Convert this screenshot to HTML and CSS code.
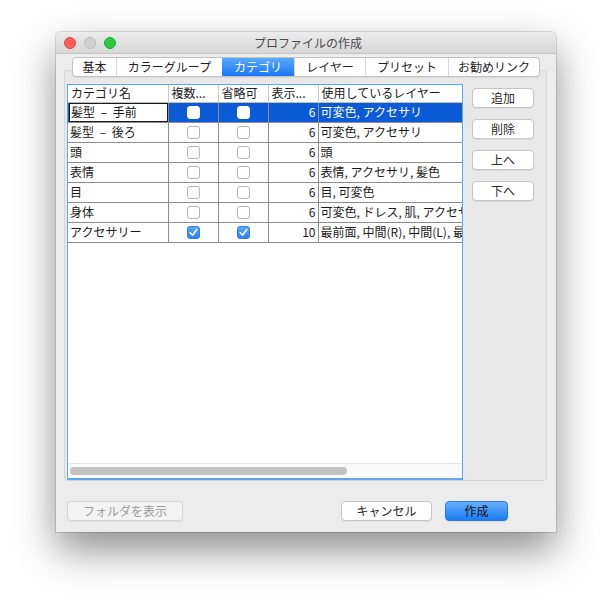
FILE: index.html
```html
<!DOCTYPE html>
<html lang="ja">
<head>
<meta charset="utf-8">
<title>プロファイルの作成</title>
<link rel="stylesheet" href="styles.css">
</head>
<body>
<div class="window">
  <div class="titlebar">
    <div class="lights">
      <span class="light red"></span>
      <span class="light gray"></span>
      <span class="light green"></span>
    </div>
    <div class="title">プロファイルの作成</div>
  </div>
  <div class="content">
    <div class="tabs">
      <div class="tab t1">基本</div>
      <div class="tab t2">カラーグループ</div>
      <div class="tab t3 active">カテゴリ</div>
      <div class="tab t4">レイヤー</div>
      <div class="tab t5">プリセット</div>
      <div class="tab t6">お勧めリンク</div>
    </div>
    <div class="panel">
      <div class="table-wrap">
        <div class="table-clip">
          <table class="grid">
            <colgroup>
              <col class="c1"><col class="c2"><col class="c3"><col class="c4"><col class="c5">
            </colgroup>
            <thead>
              <tr><th>カテゴリ名</th><th>複数...</th><th>省略可</th><th>表示...</th><th>使用しているレイヤー</th></tr>
            </thead>
            <tbody>
              <tr class="sel"><td class="edit"><span class="dash">髪型 – 手前</span></td><td class="cb"><span class="box"></span></td><td class="cb"><span class="box"></span></td><td class="num">6</td><td>可変色, アクセサリ</td></tr>
              <tr><td class="dash">髪型 – 後ろ</td><td class="cb"><span class="box"></span></td><td class="cb"><span class="box"></span></td><td class="num">6</td><td>可変色, アクセサリ</td></tr>
              <tr><td>頭</td><td class="cb"><span class="box"></span></td><td class="cb"><span class="box"></span></td><td class="num">6</td><td>頭</td></tr>
              <tr><td>表情</td><td class="cb"><span class="box"></span></td><td class="cb"><span class="box"></span></td><td class="num">6</td><td>表情, アクセサリ, 髪色</td></tr>
              <tr><td>目</td><td class="cb"><span class="box"></span></td><td class="cb"><span class="box"></span></td><td class="num">6</td><td>目, 可変色</td></tr>
              <tr><td>身体</td><td class="cb"><span class="box"></span></td><td class="cb"><span class="box"></span></td><td class="num">6</td><td>可変色, ドレス, 肌, アクセサリ</td></tr>
              <tr><td>アクセサリー</td><td class="cb"><span class="box checked"><svg viewBox="0 0 13 13" width="13" height="13"><path d="M3.3 6.8 L5.6 9.2 L9.8 3.6" fill="none" stroke="#fff" stroke-width="1.6" stroke-linecap="round" stroke-linejoin="round"/></svg></span></td><td class="cb"><span class="box checked"><svg viewBox="0 0 13 13" width="13" height="13"><path d="M3.3 6.8 L5.6 9.2 L9.8 3.6" fill="none" stroke="#fff" stroke-width="1.6" stroke-linecap="round" stroke-linejoin="round"/></svg></span></td><td class="num">10</td><td>最前面, 中間(R), 中間(L), 最背面</td></tr>
            </tbody>
          </table>
        </div>
        <div class="hscroll"><div class="thumb"></div></div>
      </div>
      <div class="side">
        <button class="btn side-btn">追加</button>
        <button class="btn side-btn">削除</button>
        <button class="btn side-btn">上へ</button>
        <button class="btn side-btn">下へ</button>
      </div>
    </div>
    <div class="footer">
      <button class="btn disabled">フォルダを表示</button>
      <button class="btn cancel">キャンセル</button>
      <button class="btn primary">作成</button>
    </div>
  </div>
</div>
</body>
</html>
```

FILE: styles.css
```css
* { box-sizing: border-box; }
html, body { margin: 0; padding: 0; background: #ffffff; }
body {
  width: 612px;
  height: 612px;
  padding: 32px 0 0 56px;
  font-family: "Noto Sans CJK JP", "Noto Sans", sans-serif;
  font-size: 12px;
  color: #1a1a1a;
}

.window {
  width: 500px;
  height: 500px;
  background: #ececec;
  border-radius: 5px 5px 0 0;
  box-shadow: 0 18px 40px rgba(0,0,0,0.45), 0 0 0 1px rgba(0,0,0,0.12);
  display: flex;
  flex-direction: column;
}

.titlebar {
  height: 22px;
  flex: 0 0 22px;
  background: linear-gradient(#ececec, #d6d6d6);
  border-bottom: 1px solid #c4c4c4;
  border-radius: 5px 5px 0 0;
  display: flex;
  align-items: center;
  position: relative;
}
.lights { display: flex; gap: 8px; padding-left: 8px; }
.light {
  width: 12px; height: 12px; border-radius: 50%;
  display: block;
}
.light.red { background: #fc5f57; border: 1px solid #e1443d; }
.light.gray { background: #d0d0d0; border: 1px solid #bcbcbc; }
.light.green { background: #2ac93f; border: 1px solid #1daa2d; }
.title {
  flex: 1;
  text-align: center;
  color: #4a4a4a;
  font-size: 12px;
  margin-right: 56px;
  line-height: 22px;
}

.content {
  flex: 1;
  display: flex;
  flex-direction: column;
  padding: 3px 9px 0 8px;
}

.tabs {
  display: flex;
  margin-left: 8px;
  height: 20px;
  position: relative;
  z-index: 1;
  align-self: flex-start;
  background: #fff;
  border: 1px solid #c3c3c3;
  border-radius: 4px;
  box-shadow: 0 1px 0 rgba(0,0,0,0.06);
}
.tab {
  height: 18px;
  line-height: 18px;
  text-align: center;
  color: #1e1e1e;
  border-left: 1px solid #d8d8d8;
}
.tab.t1 { width: 43px; border-left: none; }
.tab.t2 { width: 106px; }
.tab.t3 { width: 72px; }
.tab.t4 { width: 71px; }
.tab.t5 { width: 83px; }
.tab.t6 { width: 91px; }
.tab.active {
  background: linear-gradient(#5aa9fd, #1877f5);
  color: #fff;
  border-left: none;
}

.panel {
  margin-top: -7px;
  height: 411px;
  background: #e8e8e8;
  border: 1px solid #d6d6d6;
  border-radius: 4px;
  display: flex;
  padding: 13px 0 0 2px;
}

.table-wrap {
  width: 396px;
  height: 396px;
  border: 1px solid #5ea8f2;
  border-bottom-width: 2px;
  background: #fff;
  display: flex;
  flex-direction: column;
}
.table-clip {
  flex: 1;
  overflow: hidden;
}
.grid {
  border-collapse: collapse;
  table-layout: fixed;
  width: 560px;
  font-size: 12px;
}
.grid col.c1 { width: 100px; }
.grid col.c2 { width: 50px; }
.grid col.c3 { width: 50px; }
.grid col.c4 { width: 50px; }
.grid col.c5 { width: 310px; }
.grid th {
  height: 17px;
  font-weight: normal;
  text-align: left;
  padding: 0 3px;
  border-right: 1px solid #c8c8c8;
  border-bottom: 1px solid #bdbdbd;
  white-space: nowrap;
  overflow: hidden;
  line-height: 16px;
  color: #1a1a1a;
}
.grid td {
  height: 20px;
  padding: 0 2px;
  border-right: 1px solid #8d8d8d;
  border-bottom: 1px solid #8d8d8d;
  white-space: nowrap;
  overflow: hidden;
  line-height: 18px;
}
.grid .dash { word-spacing: 3px; }
.grid td.num { text-align: right; padding-right: 2px; }
.grid td.cb { text-align: center; padding: 0; }
.grid tr.sel td { background: #0b5bd6; color: #fff; }
.grid tr.sel td.edit { background: #0b5bd6; padding: 0; }
.grid tr.sel td.edit span {
  display: block;
  height: 19px;
  margin: 0 0 0 1px;
  background: #fff;
  color: #111;
  border: 1.5px solid #1a1a1a;
  padding: 0 1px;
  line-height: 16px;
}
.box {
  display: inline-block;
  width: 13px;
  height: 13px;
  border: 1px solid #b5b5b5;
  border-radius: 3px;
  background: #fff;
  vertical-align: middle;
  position: relative;
  top: -1px;
}
.grid tr.sel .box { border-color: #fff; }
.box.checked {
  background: linear-gradient(#5ea5fb, #2b83f5);
  border-color: #2f7fe6;
}
.box.checked svg { position: absolute; left: -1px; top: -1px; }

.hscroll {
  height: 15px;
  flex: 0 0 15px;
  background: #f9f9f9;
  border-top: 1px solid #e6e6e6;
  padding: 3px 0 0 2px;
}
.thumb {
  width: 277px;
  height: 8px;
  border-radius: 4px;
  background: #c2c2c2;
}

.side {
  display: flex;
  flex-direction: column;
  gap: 11px;
  padding: 4px 0 0 9px;
}
.btn {
  font-family: "Noto Sans CJK JP", "Noto Sans", sans-serif;
  font-size: 12px;
  height: 20px;
  padding: 0;
  line-height: 18px;
  border-radius: 4px;
  background: #fff;
  border: 1px solid #c5c5c5;
  color: #2a2a2a;
  box-shadow: 0 1px 0 rgba(0,0,0,0.05);
}
.side-btn { width: 62px; }

.footer {
  display: flex;
  align-items: center;
  padding: 20px 39px 0 3px;
  gap: 13px;
}
.btn.disabled {
  width: 116px;
  background: #f3f3f3;
  border-color: #d6d6d6;
  color: #9c9c9c;
}
.btn.cancel { width: 91px; margin-left: auto; }
.btn.primary {
  width: 63px;
  background: linear-gradient(#67affd, #1a7cf5);
  border-color: #2a78e0;
  color: #111;
}
```
